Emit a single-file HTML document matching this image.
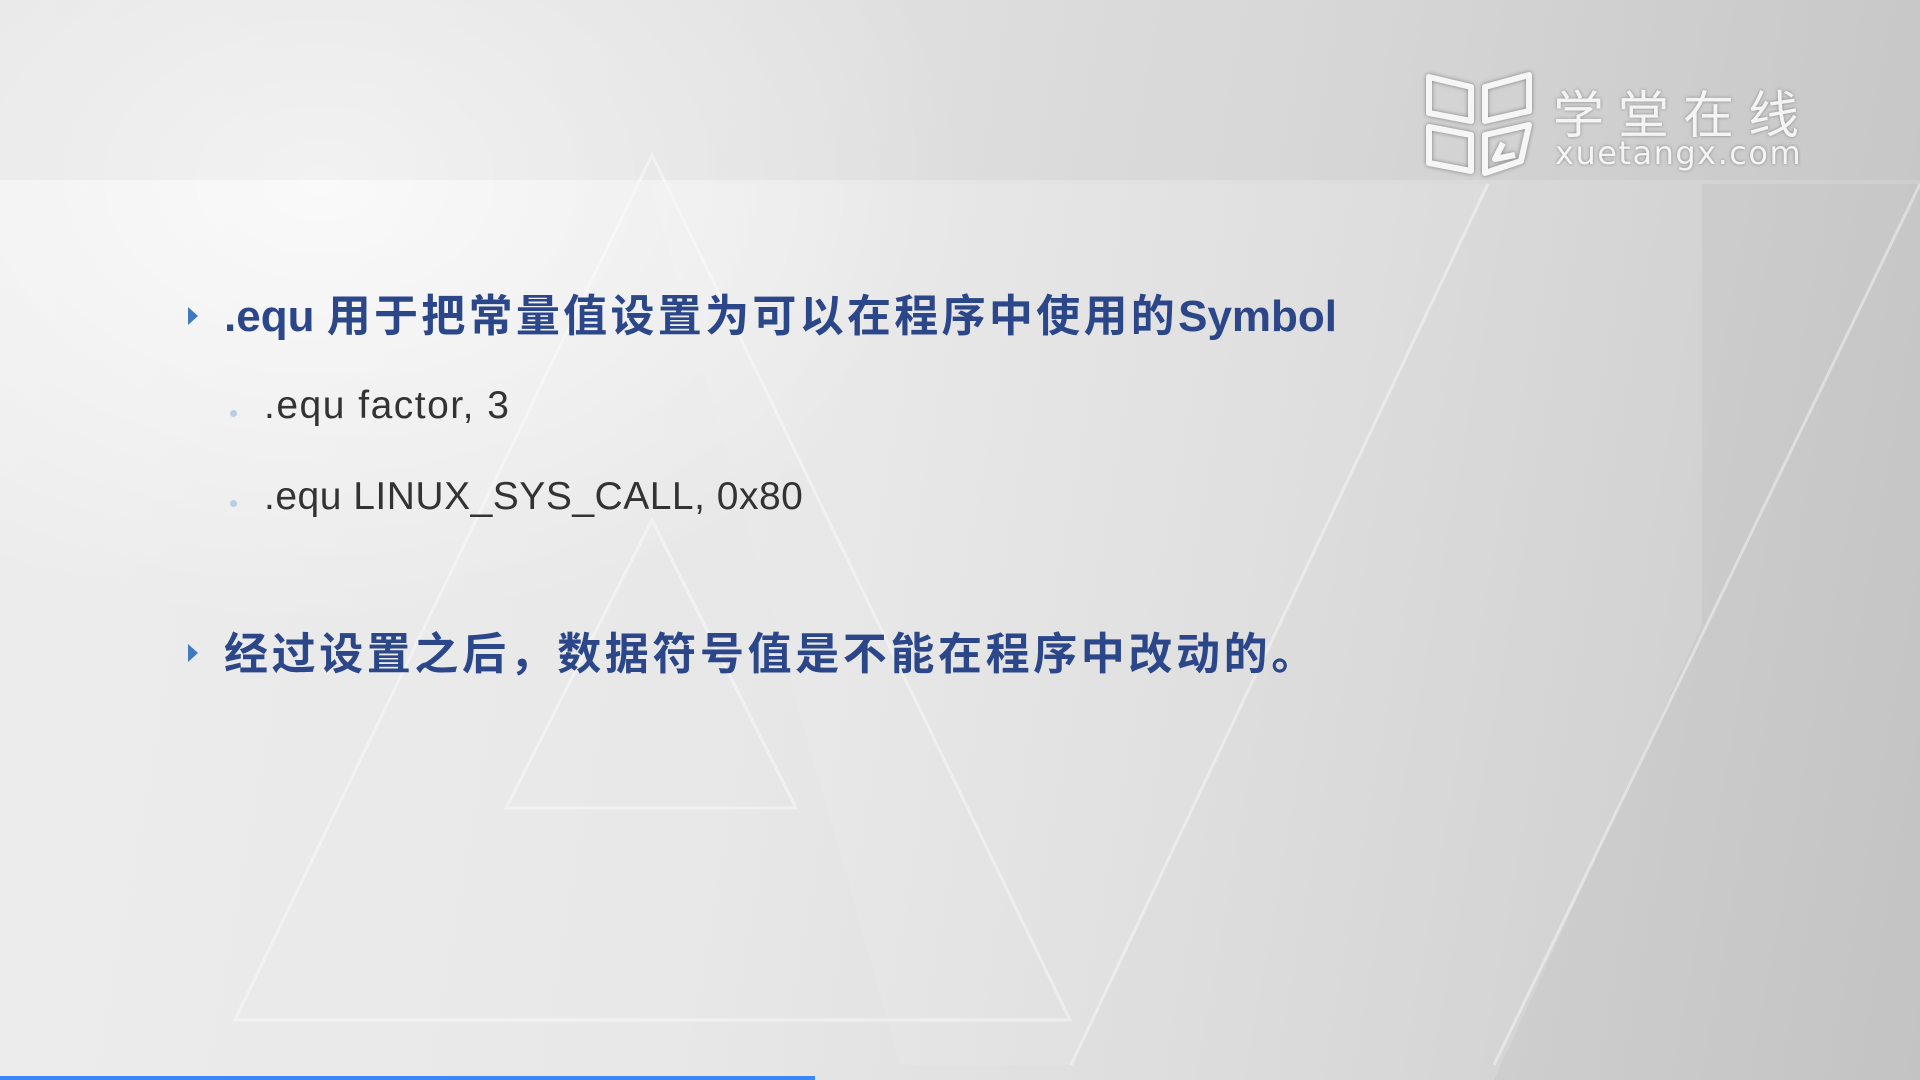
<!DOCTYPE html>
<html><head><meta charset="utf-8"><style>
html,body{margin:0;padding:0;width:1920px;height:1080px;overflow:hidden}
body{position:relative;background:linear-gradient(100deg,#ededed 0%,#e8e8e8 40%,#dddddd 65%,#cacaca 100%);font-family:"Liberation Sans","Noto Sans CJK SC",sans-serif}
.glow{position:absolute;left:0;top:0;width:1920px;height:1080px;background:radial-gradient(ellipse 650px 450px at 320px 180px,rgba(255,255,255,.75),rgba(255,255,255,0) 100%)}
svg.bg{position:absolute;left:0;top:0}
.t{position:absolute;white-space:nowrap}
.b1{color:#2c4789;font-weight:bold;font-size:44px}
.cj{letter-spacing:3.3px}
.sub{color:#333;font-size:39px;letter-spacing:.5px}
.arr{position:absolute;width:0;height:0;border-top:9px solid transparent;border-bottom:9px solid transparent;border-left:10px solid #3f79c0}
.dot{position:absolute;width:7px;height:7px;border-radius:50%;background:#b9cde4}
.bar{position:absolute;left:0;top:1076px;width:815px;height:4px;background:#3d86f5}
.logo{position:absolute;color:#f4f4f4;text-shadow:0 0 3px rgba(0,0,0,.35)}
</style></head><body>
<div class="glow"></div>
<svg class="bg" width="1920" height="1080" viewBox="0 0 1920 1080">
<g fill="rgba(0,0,0,.03)">
<rect x="0" y="0" width="1920" height="180"/>
<polygon points="1702,184 1920,184 1920,625 1702,625"/>
<polygon points="1494,1080 1702,625 1920,625 1920,1080"/>
</g>
<g fill="rgba(255,255,255,.08)">
<polygon points="650,184 1488,184 1071,1065 900,1065"/>
</g>
<g fill="none" stroke="rgba(255,255,255,.4)" stroke-width="3">
<polygon points="652,155 1070,1020 235,1020"/>
<polygon points="652,520 796,808 506,808"/>
<line x1="1488" y1="184" x2="1071" y2="1065"/>
<line x1="1920" y1="184" x2="1494" y2="1065"/>
</g>
</svg>
<div class="logo" style="left:1423px;top:71px">
<svg width="112" height="108" viewBox="0 0 112 108" fill="none" stroke="#f6f6f6" stroke-width="6" stroke-linejoin="round" style="filter:drop-shadow(0 0 2px rgba(0,0,0,.4))">
<path d="M6 6 L48 16 L48 50 L6 42 Z"/>
<path d="M6 56 L48 64 L48 100 L6 92 Z"/>
<path d="M62 16 L106 4 L106 40 L62 50 Z"/>
<path d="M62 64 L106 54 L98 90 L62 102 Z"/>
<path d="M80 72 L72 88 L92 84"/>
</svg></div>
<div class="t logo" style="left:1553px;top:74px;font-size:51px;letter-spacing:14px;font-family:'Noto Sans CJK SC',sans-serif">学堂在线</div>
<div class="t logo" style="left:1555px;top:134px;font-size:32px;font-family:'DejaVu Sans',sans-serif;letter-spacing:1.5px">xuetangx.com</div>

<div class="arr" style="left:188px;top:307px"></div>
<div class="t b1" style="left:224px;top:280px">.equ <span class="cj">用于把常量值设置为可以在程序中使用的</span>Symbol</div>
<div class="dot" style="left:230px;top:410px"></div>
<div class="t sub" style="left:264px;top:384px;letter-spacing:1.5px">.equ factor, 3</div>
<div class="dot" style="left:230px;top:500px"></div>
<div class="t sub" style="left:264px;top:475px">.equ LINUX_SYS_CALL, 0x80</div>
<div class="arr" style="left:188px;top:644px"></div>
<div class="t b1" style="left:224px;top:618px;letter-spacing:3.6px">经过设置之后，数据符号值是不能在程序中改动的。</div>
<div class="bar"></div>
</body></html>
